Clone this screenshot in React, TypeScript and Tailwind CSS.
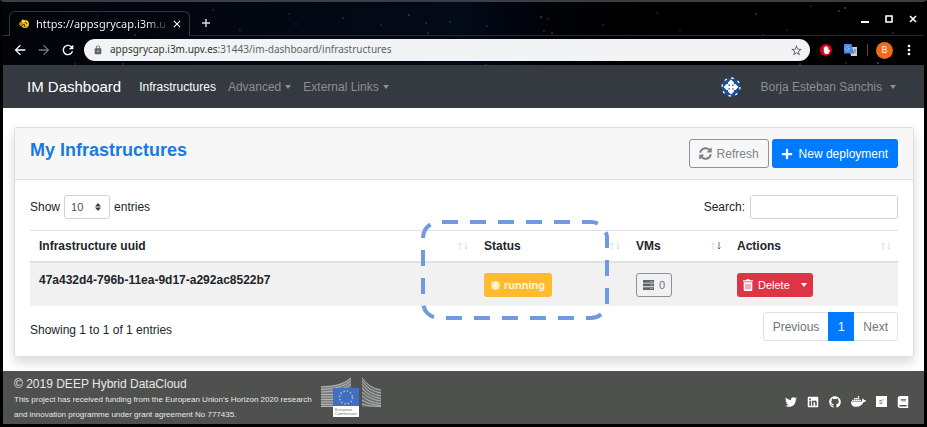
import type { ReactNode } from "react";
import {
  FaBook,
  FaDocker,
  FaGithub,
  FaLinkedin,
  FaPlus,
  FaSun,
  FaSyncAlt,
  FaTwitter,
} from "react-icons/fa";
import {
  MdArrowBack,
  MdArrowForward,
  MdClose,
  MdLock,
  MdMoreVert,
  MdRefresh,
  MdStarBorder,
} from "react-icons/md";

const stars = [
  [56, 20, 0.3], [95, 14, 0.3], [132, 33, 0.4], [340, 16, 0.4], [378, 23, 0.3],
  [406, 13, 0.5], [423, 21, 0.4], [447, 20, 0.3], [425, 31, 0.4], [484, 24, 0.4],
  [538, 15, 0.6], [545, 17, 0.4], [541, 29, 0.4], [549, 31, 0.5], [600, 23, 0.4],
  [626, 33, 0.3], [654, 11, 0.3], [677, 28, 0.3], [753, 12, 0.5], [760, 33, 0.5],
  [784, 28, 0.3], [836, 9, 0.6], [842, 6, 0.7], [890, 31, 0.5], [875, 61, 0.8],
  [797, 62, 0.5], [483, 63, 0.4], [120, 62, 0.4], [286, 12, 0.3], [293, 22, 0.3],
  [210, 8, 0.3], [237, 28, 0.3], [72, 62, 0.3], [843, 61, 0.4], [808, 4, 0.3],
];

function StarField() {
  return (
    <svg className="absolute inset-0 h-full w-full" aria-hidden="true">
      {stars.map(([x, y, o]) => (
        <circle key={`${x}-${y}`} cx={x} cy={y} r="0.8" fill="#9fb59a" opacity={o} />
      ))}
    </svg>
  );
}

function Caret() {
  return (
    <span className="inline-block border-x-[3px] border-t-[4px] border-x-transparent border-t-current" />
  );
}

function BrowserChrome() {
  return (
    <div className="relative bg-gradient-to-r from-[#02040a] via-[#030a18] via-50% to-black to-75%">
      <StarField />
      <div className="relative flex h-[34px] items-end font-['Noto_Sans',sans-serif] text-white">
        <div className="h-px w-[6px] bg-[#33363c]" />
        <div className="flex h-[25px] w-[181px] items-center rounded-t-md border-x border-t border-[#33363c] pl-2">
          <svg viewBox="0 0 12 12" className="size-3" aria-hidden="true">
            <circle cx="7" cy="6" r="4" fill="#e8b91c" />
            <circle cx="3" cy="6" r="2" fill="#c58a10" />
            <circle cx="5" cy="3" r="1.6" fill="#f3d64c" />
            <path d="M4 8l2-2 1 3M7 4l2 2" stroke="#3b2b05" fill="none" />
          </svg>
          <span className="ml-[6px] bg-gradient-to-r from-white from-85% to-[#333] to-100% bg-clip-text text-[11px] whitespace-nowrap text-transparent">
            https://appsgrycap.i3m.u
          </span>
          <button aria-label="Close tab" className="mr-[6px] ml-auto">
            <MdClose className="size-3" />
          </button>
        </div>
        <div className="flex h-[25px] flex-1 items-center border-b border-[#26292e]">
          <button aria-label="New tab" className="ml-[11px]">
            <svg viewBox="0 0 10 10" className="size-[10px]"><path d="M5 1v8M1 5h8" stroke="#ddd" strokeWidth="1.4" /></svg>
          </button>
          <div className="mb-2 ml-auto flex items-center gap-4 pr-[7px]">
            <button aria-label="Minimise">
              <svg viewBox="0 0 8 8" className="size-2"><path d="M0 7h8" stroke="#fff" strokeWidth="2" /></svg>
            </button>
            <button aria-label="Maximise">
              <svg viewBox="0 0 8 8" className="size-2"><path d="M1 1h6v6H1z" stroke="#fff" strokeWidth="1.6" fill="none" /></svg>
            </button>
            <button aria-label="Close">
              <svg viewBox="0 0 8 8" className="size-2"><path d="M1 1l6 6M7 1L1 7" stroke="#fff" strokeWidth="1.6" /></svg>
            </button>
          </div>
        </div>
      </div>
      <div className="relative flex h-[29px] items-center pb-px pl-[9px] pr-[7px] text-white">
        <button aria-label="Back"><MdArrowBack className="size-4" /></button>
        <button aria-label="Forward" className="ml-2 text-[#777]"><MdArrowForward className="size-4" /></button>
        <button aria-label="Reload" className="ml-2"><MdRefresh className="size-4" /></button>
        <div className="ml-2 flex h-[22px] flex-1 items-center rounded-full bg-[#f1f3f4] pl-[9px] pr-[7px] text-[#5f6368]">
          <MdLock className="size-[10px]" />
          <span className="ml-[7px] flex-1 font-['Noto_Sans',sans-serif] text-[10px]">
            <span className="text-[#333]">appsgrycap.i3m.upv.es</span>:31443/im-dashboard/infrastructures
          </span>
          <button aria-label="Bookmark"><MdStarBorder className="size-[13px]" /></button>
        </div>
        <button aria-label="Content blocker" className="ml-[10px]">
          <svg viewBox="0 0 12 12" className="size-3">
            <circle cx="6" cy="6" r="6" fill="#d9001b" />
            <path d="M3.800 6V3.200h1.200V2h1.200v.5h1.200v.8h1v3l1-.8.8.7L8.200 10H5.200L3.800 8z" fill="#fff" />
          </svg>
        </button>
        <button aria-label="Translate" className="ml-3">
          <svg viewBox="0 0 13 12" className="h-3 w-[13px]">
            <path d="M5 3h8v9H7z" fill="#cfd3d8" />
            <path d="M0 0h7.500l2.500 9.500H0z" fill="#4a86e8" />
            <path d="M5.500 4.500H3.800M5 3.200a2 2 0 1 0 .5 1.400" stroke="#a9c8ff" strokeWidth=".8" fill="none" />
            <path d="M9.500 6h3M11 5v1c0 2-1 3-2 3.500M10 7l2 2.500" stroke="#68717c" strokeWidth=".7" fill="none" />
          </svg>
        </button>
        <span className="ml-[10px] h-3 w-px bg-[#6b4a20]" />
        <button aria-label="Profile" className="ml-2 flex size-[17px] items-center justify-center rounded-full bg-[#f26a1b] font-['Noto_Sans',sans-serif] text-[9px]">
          B
        </button>
        <button aria-label="Menu" className="ml-2"><MdMoreVert className="size-4" /></button>
      </div>
    </div>
  );
}

function Avatar() {
  return (
    <svg viewBox="0 0 20 20" className="size-5" aria-hidden="true">
      <circle cx="10" cy="10" r="9.500" fill="#1d4f9c" />
      <circle cx="10" cy="10" r="9" fill="none" stroke="#fff" strokeWidth="1.300" strokeDasharray="2.500 4.569" />
      <path d="M10 2.500l3 3v1.500h1.500l3 3-3 3H13v1.500l-3 3-3-3V13H5.500l-3-3 3-3H7V5.500z" fill="#fff" />
      <path d="M7.500 7.500h1.400v1.400H7.500zM11.200 7.500h1.400v1.400h-1.400zM7.500 11.200h1.400v1.400H7.500zM11.200 11.200h1.400v1.400h-1.400z" fill="#1d4f9c" />
    </svg>
  );
}

function Navbar() {
  return (
    <nav className="flex h-[43px] items-center bg-[#343a40] px-6 text-[#8b8f93]">
      <a href="#home" className="text-[15px] text-white">IM Dashboard</a>
      <a href="#infrastructures" className="ml-[18px] text-white">Infrastructures</a>
      <button className="ml-3 flex items-center gap-1">Advanced <Caret /></button>
      <button className="ml-3 flex items-center gap-1">External Links <Caret /></button>
      <div className="ml-auto flex items-center pr-1">
        <Avatar />
        <button className="ml-5 flex items-center gap-2">Borja Esteban Sanchis <Caret /></button>
      </div>
    </nav>
  );
}

function SortArrows({ sorted = false }: { sorted?: boolean }) {
  return (
    <svg viewBox="0 0 10 8" className="h-2 w-[10px]" fill="none" aria-hidden="true">
      <path d="M2 8V1M.500 2.500L2 1l1.500 1.500" stroke="#d4d4d4" strokeWidth=".8" />
      <path d="M8 0v7M6.500 5.500L8 7l1.500-1.500" stroke={sorted ? "#555" : "#d4d4d4"} strokeWidth=".8" />
    </svg>
  );
}

function HeaderCell({ children, width, sorted }: { children: ReactNode; width: string; sorted?: boolean }) {
  return (
    <th scope="col" className={`${width} border-b-2 border-t border-[#dee2e6] py-0 pl-[9px] pr-[7px] text-left`}>
      <div className="flex h-[30px] items-center justify-between">
        {children}
        <SortArrows sorted={sorted} />
      </div>
    </th>
  );
}

function ServerIcon() {
  return (
    <svg viewBox="0 0 11 10" className="h-[10px] w-[11px]" aria-hidden="true">
      <path d="M0 0h11v2.700H0zM0 3.600h11v2.700H0zM0 7.200h11V10H0z" fill="#5c656d" />
      <path d="M7 1.400h3M7 5h3M7 8.600h3" stroke="#a9b0b6" strokeWidth=".7" />
    </svg>
  );
}

function TrashIcon() {
  return (
    <svg viewBox="0 0 10 12" className="h-3 w-[10px]" aria-hidden="true">
      <path d="M0 1.200h3L3.600.300h2.800l.6.900h3v1.400H0z" fill="#fff" />
      <path d="M.700 3.300h8.600V11a1 1 0 0 1-1 1H1.700a1 1 0 0 1-1-1z" fill="#fff" />
      <path d="M3 5v5.400M5 5v5.400M7 5v5.400" stroke="#dc3545" strokeWidth=".8" />
    </svg>
  );
}

function Highlight() {
  return (
    <svg
      viewBox="0 0 190 102"
      className="pointer-events-none absolute -top-[11px] left-[390px] h-[102px] w-[190px]"
      aria-hidden="true"
    >
      <path
        d="M3 19a16 16 0 0 1 16-16h152a16 16 0 0 1 16 16v64a16 16 0 0 1-16 16H19a16 16 0 0 1-16-16z"
        fill="none"
        stroke="#6f9adf"
        strokeWidth="4"
        strokeDasharray="16 12"
      />
    </svg>
  );
}

function InfrastructureTable() {
  return (
    <div className="relative mt-[11px]">
      <table className="w-full table-fixed border-separate border-spacing-0">
        <thead>
          <tr>
            <HeaderCell width="w-[445px]">Infrastructure uuid</HeaderCell>
            <HeaderCell width="w-[152px]">Status</HeaderCell>
            <HeaderCell width="w-[101px]" sorted>VMs</HeaderCell>
            <HeaderCell width="w-auto">Actions</HeaderCell>
          </tr>
        </thead>
        <tbody>
          <tr className="bg-[#f1f1f1] align-top">
            <td className="px-[9px] py-[9px] font-bold">47a432d4-796b-11ea-9d17-a292ac8522b7</td>
            <td className="px-[9px] pt-[10px] pb-[9px]">
              <span className="flex h-6 w-[68px] items-center justify-center gap-1 rounded-[3px] bg-[#fdbb2f] text-[11px] font-bold text-[#fff6dc]">
                <FaSun className="size-[9px] rounded-full bg-[#fff6dc]/60" />
                running
              </span>
            </td>
            <td className="px-[9px] pt-[10px] pb-[9px]">
              <button className="flex h-6 items-center gap-[5px] rounded-[3px] border border-[#8b9299] px-[6px] text-[11px] text-[#6c757d]">
                <ServerIcon />
                0
              </button>
            </td>
            <td className="px-[9px] pt-[10px] pb-[9px]">
              <div className="flex h-6 w-[76px] items-center rounded-[3px] bg-[#dc3545] text-[11px] text-white">
                <button className="flex flex-1 items-center gap-[5px] pl-[6px]">
                  <TrashIcon />
                  Delete
                </button>
                <button aria-label="More actions" className="flex h-full w-[18px] items-center justify-center"><Caret /></button>
              </div>
            </td>
          </tr>
        </tbody>
      </table>
      <Highlight />
    </div>
  );
}

function InfrastructureCard() {
  return (
    <section className="rounded-[3px] border border-[#dfdfdf] bg-white shadow-[0_6px_12px_rgba(0,0,0,0.15)]">
      <header className="flex items-start gap-[3px] border-b border-[#dfdfdf] bg-[#f7f7f7] px-[15px] py-[11px]">
        <h1 className="mr-auto text-lg leading-[22px] font-bold text-[#187bde]">My Infrastructures</h1>
        <button className="flex h-[29px] items-center gap-[5px] rounded-[3px] border border-[#8b9299] px-[9px] text-[#7b848c]">
          <FaSyncAlt className="size-[13px]" />
          Refresh
        </button>
        <button className="flex h-[29px] items-center gap-[6px] rounded-[3px] bg-[#007bff] pr-[10px] pl-[9px] text-white">
          <FaPlus className="size-3" />
          New deployment
        </button>
      </header>
      <div className="px-[15px] pt-[15px] pb-[15px]">
        <div className="flex items-center">
          <label className="flex items-center gap-1">
            Show
            <span className="relative flex">
              <select className="h-6 w-[46px] appearance-none rounded-[3px] border border-[#ced4da] bg-white pl-[6px] text-[11px] text-[#495057]">
                <option>10</option>
              </select>
              <svg viewBox="0 0 6 8" className="pointer-events-none absolute top-2 right-[9px] h-2 w-[6px]" aria-hidden="true">
                <path d="M3 0l3 3.500H0zM3 8L0 4.500h6z" fill="#343a40" />
              </svg>
            </span>
            entries
          </label>
          <label className="ml-auto flex items-center gap-[5px]">
            Search:
            <input type="search" className="h-6 w-[148px] rounded-[3px] border border-[#ced4da] bg-white px-[6px] text-[11px]" />
          </label>
        </div>
        <InfrastructureTable />
        <div className="flex items-start pt-[6px]">
          <p className="pt-[10px]">Showing 1 to 1 of 1 entries</p>
          <nav aria-label="Pages" className="ml-auto flex h-[29px] rounded-[3px] border border-[#dee2e6] text-[#6c757d]">
            <button className="px-[9px]">Previous</button>
            <button aria-current="page" className="-my-px w-[26px] bg-[#007bff] text-white">1</button>
            <button className="px-[9px]">Next</button>
          </nav>
        </div>
      </div>
    </section>
  );
}

function CommissionLogo() {
  return (
    <svg viewBox="0 0 62 42" className="h-[42px] w-[62px]" role="img" aria-label="European Commission">
      <path d="M1 9Q22 9 31 0V14H14V30H1z" fill="#7c7e7d" />
      <path d="M42 0Q47 11 61 13V30H42z" fill="#6c6e6d" />
      <g stroke="#b4b6b5" strokeWidth="1" fill="none">
        <path d="M1 10Q22 10 31 1M1 12.500Q22 12 31 4M1 15Q22 15 31 7M1 17.500h14M1 20h14M1 22.500h14M1 25h14M1 27.500h14M1 29.500h13" />
        <path d="M42 1Q49 11 61 13M42 4Q49 14 61 16M42 7.500Q49 17 61 19M42 11Q49 20 61 21.500M42 15Q49 22.500 61 24M42 19Q49 25.500 61 26.500M42 23Q49 27.500 61 28.500M42 27Q49 29.500 61 29.500" />
      </g>
      <path d="M13 11h26v19H13z" fill="#3f6fc4" />
      <circle cx="26" cy="20.500" r="6.500" fill="none" stroke="#b9c878" strokeWidth="1.500" strokeDasharray="1.400 2.003" />
      <path d="M13 29h26v11H13z" fill="#fff" />
      <text x="15" y="34" fontSize="4" fill="#777">European</text>
      <text x="15" y="38" fontSize="4" fill="#777">Commission</text>
    </svg>
  );
}

function Footer() {
  return (
    <footer className="flex flex-1 items-start bg-[#4f514f] pr-[15px] pl-[11px] text-[#e8e8e8]">
      <div className="w-[294px] pt-[5px]">
        <p>© 2019 DEEP Hybrid DataCloud</p>
        <p className="text-[8px] leading-[15px] whitespace-nowrap">
          This project has received funding from the European Union's Horizon 2020 research
          <br />
          and innovation programme under grant agreement No 777435.
        </p>
      </div>
      <div className="ml-3 pt-[6px]"><CommissionLogo /></div>
      <div className="ml-auto flex items-center gap-[10px] pt-6 text-white">
        <a href="#twitter" aria-label="Twitter"><FaTwitter className="size-3" /></a>
        <a href="#linkedin" aria-label="LinkedIn"><FaLinkedin className="size-3" /></a>
        <a href="#github" aria-label="GitHub"><FaGithub className="size-3" /></a>
        <a href="#docker" aria-label="Docker"><FaDocker className="h-[13px] w-[15px]" /></a>
        <a href="#marketplace" aria-label="Marketplace" className="flex size-[11px] items-center justify-center bg-white text-[7px] text-[#666]">
          s'
        </a>
        <a href="#docs" aria-label="Documentation"><FaBook className="size-3" /></a>
      </div>
    </footer>
  );
}

export default function App() {
  return (
    <div className="flex min-h-screen flex-col border-x-[3px] border-t-2 border-b-[3px] border-x-black border-t-[#3a3f45] border-b-black bg-white font-['Liberation_Sans',Arial,sans-serif] text-xs text-[#212529]">
      <BrowserChrome />
      <Navbar />
      <main className="pt-[19px] pr-[10px] pb-[14px] pl-[11px]">
        <InfrastructureCard />
      </main>
      <Footer />
    </div>
  );
}
